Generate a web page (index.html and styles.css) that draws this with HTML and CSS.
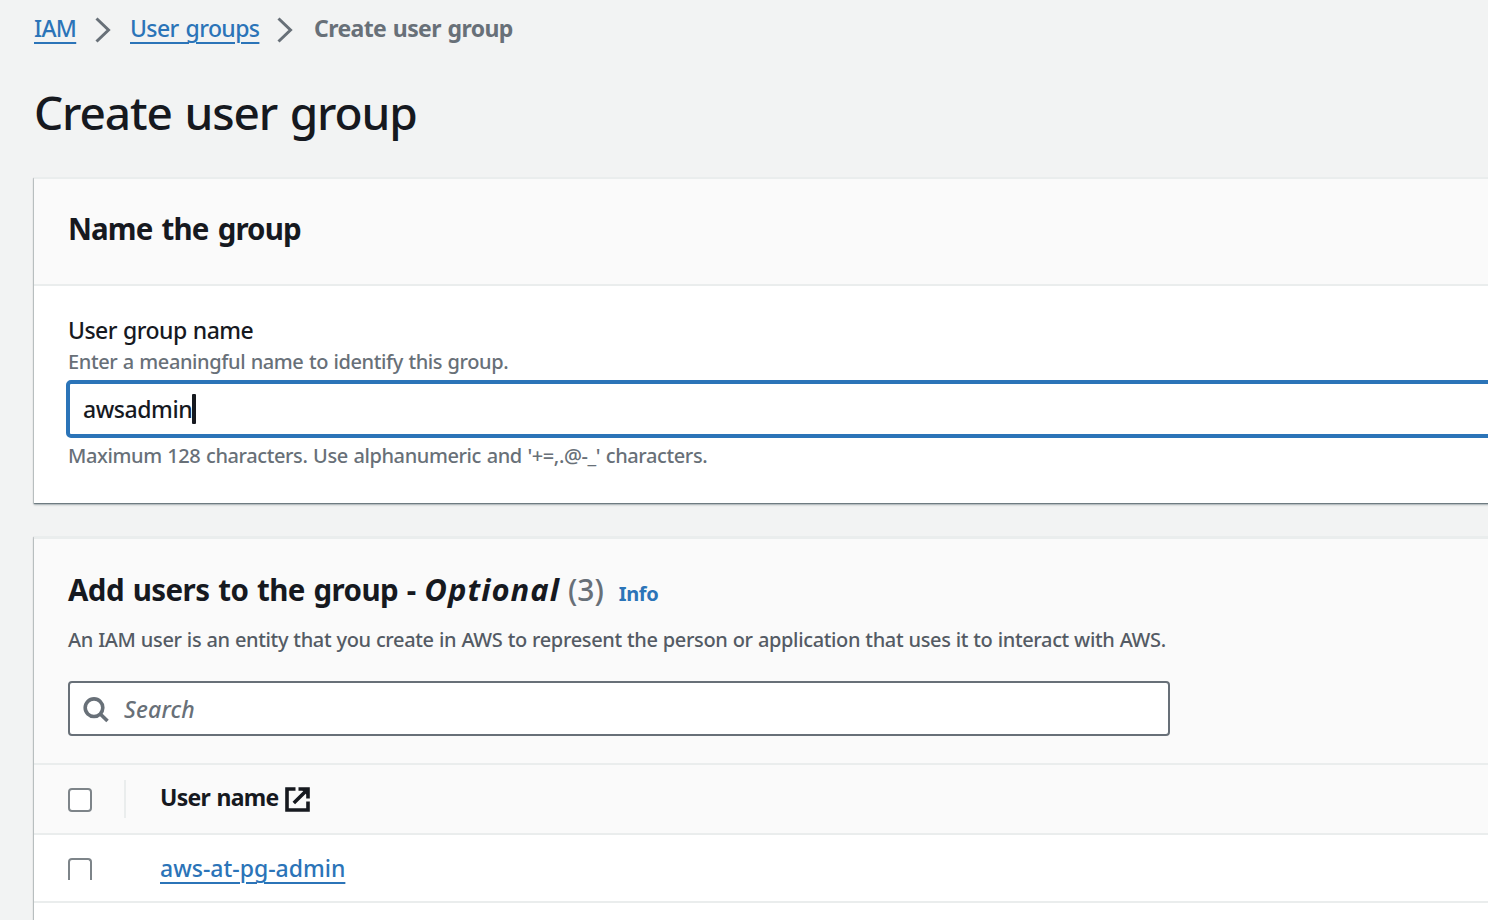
FILE: index.html
```html
<!DOCTYPE html>
<html lang="en">
<head>
<meta charset="utf-8">
<title>Create user group</title>
<link rel="stylesheet" href="styles.css">
</head>
<body>
<main class="page">
  <nav class="crumbs">
    <a class="link crumb-iam" href="#">IAM</a>
    <svg class="chevron" width="16" height="26" viewBox="0 0 16 26"><path d="M1.5 1.5 L13.5 13 L1.5 24.5"/></svg>
    <a class="link crumb-groups" href="#">User groups</a>
    <svg class="chevron" width="16" height="26" viewBox="0 0 16 26"><path d="M1.5 1.5 L13.5 13 L1.5 24.5"/></svg>
    <span class="crumb-current">Create user group</span>
  </nav>
  <h1 class="title"><span>Create user group</span></h1>

  <section class="card name-card">
    <header class="name-header"><h2 class="heading"><span class="name-heading">Name the group</span></h2></header>
    <div class="name-body">
      <div class="label"><span>User group name</span></div>
      <div class="hint hint-top"><span>Enter a meaningful name to identify this group.</span></div>
      <div class="field"><span class="value">awsadmin</span><span class="caret"></span></div>
      <div class="hint hint-bottom"><span>Maximum 128 characters. Use alphanumeric and '+=,.@-_' characters.</span></div>
    </div>
  </section>

  <section class="card users-card">
    <header class="users-header">
      <div class="users-title">
        <h2 class="heading"><span class="add">Add users to the group - </span><em class="optional">Optional</em></h2>
        <span class="count">(3)</span>
        <a class="info" href="#">Info</a>
      </div>
      <p class="desc"><span>An IAM user is an entity that you create in AWS to represent the person or application that uses it to interact with AWS.</span></p>
      <div class="search">
        <svg width="26" height="26" viewBox="0 0 26 26"><circle cx="11" cy="10.7" r="8.8"/><path d="M17.3 17 L24.5 24"/></svg>
        <span class="placeholder">Search</span>
      </div>
    </header>
    <div class="row head-row">
      <span class="checkbox"></span>
      <span class="divider"></span>
      <span class="column-name">User name</span>
      <svg class="external" width="25" height="25" viewBox="0 0 25 25"><path d="M10.5 2 H2 V23 H23 V14.5"/><path d="M13.5 2 H23 V11.5 M22 3 L8.8 16"/><path class="tip" d="M16 2 H23 V9 Z"/></svg>
    </div>
    <div class="row user-row">
      <span class="checkbox checkbox-cut"></span>
      <a class="link user-link" href="#">aws-at-pg-admin</a>
    </div>
    <div class="row next-row"></div>
  </section>
</main>
</body>
</html>
```
FILE: styles.css
```css
* { box-sizing: border-box; }

body {
  margin: 0;
  background: #f2f3f3;
  color: #16191f;
  font-family: "Noto Sans", "Open Sans", sans-serif;
  font-size: 23px;
  font-weight: 500;
}

h1, h2, p { margin: 0; }

.page {
  height: 920px;
  padding-left: 34px;
  overflow: hidden;
  white-space: nowrap;
}

.link {
  color: #2b74b8;
  text-decoration: underline;
  text-decoration-thickness: 2px;
  text-underline-offset: 5px;
}

.crumbs {
  display: flex;
  align-items: center;
  height: 58px;
  line-height: 56px;
}
.crumb-iam { width: 42px; letter-spacing: -.7px; margin-top: -2px; }
.crumb-groups { width: 129px; letter-spacing: -.6px; word-spacing: 1.5px; margin-top: -2px; }
.chevron {
  flex: none;
  margin: 2px 19px 0 18px;
  fill: none;
  stroke: #687078;
  stroke-width: 3;
}
.crumb-iam + .chevron { margin-left: 19px; margin-right: 19px; }
.crumb-current {
  margin: -2px 0 0 2px;
  color: #687078;
  font-weight: 700;
  letter-spacing: -.6px;
  word-spacing: 1.2px;
}

.title {
  height: 119px;
  padding-top: 22px;
  font-size: 46px;
  line-height: 64px;
  font-weight: 500;
  letter-spacing: -1.1px;
  word-spacing: 1.7px;
}

.card {
  background: #fff;
  border-top: 2px solid #eaeded;
  box-shadow: 0 2px 2px rgba(0, 28, 36, .25), 0 1px 1px #8f999e, -1px 1px 1px rgba(0, 7, 22, .12);
  width: 1500px;
}

.name-card { height: 326px; }
.name-header {
  height: 107px;
  padding: 29px 34px;
  background: #fafafa;
  border-bottom: 2px solid #eaeded;
}
.heading { font-size: 30px; line-height: 42px; font-weight: 700; }
.name-heading { font-size: 29.5px; letter-spacing: -.9px; word-spacing: 2.4px; }

.name-body { padding: 30px 32px 0; }
.label { height: 30px; padding-left: 2px; line-height: 29px; letter-spacing: -.55px; word-spacing: .8px; }
.hint { padding-left: 2px; color: #687078; font-size: 20px; line-height: 30px; }
.hint-top { height: 34px; padding-top: 1px; letter-spacing: -.4px; word-spacing: .7px; }
.hint-bottom { padding-top: 3px; letter-spacing: -.4px; word-spacing: .8px; }
.field {
  display: flex;
  align-items: center;
  height: 58px;
  padding-left: 13px;
  border: 4px solid #2b74b8;
  border-radius: 5px;
  background: #fff;
}
.value { letter-spacing: -.45px; }
.caret { width: 4px; height: 30px; border-radius: 1px; background: #16191f; }

.users-card { height: 400px; margin-top: 33px; border-top-width: 3px; }
.users-header {
  height: 226px;
  padding: 29px 34px 0;
  background: #fafafa;
  border-bottom: 2px solid #eaeded;
}
.users-title { display: flex; align-items: baseline; height: 56px; }
.add { white-space: pre; font-size: 29.5px; letter-spacing: -.55px; word-spacing: 1.5px; }
.optional { font-size: 31px; letter-spacing: 1px; }
.count { margin-left: 8px; color: #687078; font-size: 30px; line-height: 42px; letter-spacing: 0; }
.info { margin-left: 15px; color: #2b74b8; font-size: 20px; font-weight: 700; letter-spacing: -.4px; text-decoration: none; }
.desc { height: 57px; color: #545b64; font-size: 20px; line-height: 32px; letter-spacing: -.35px; word-spacing: .35px; }
.search {
  display: flex;
  align-items: center;
  width: 1102px;
  height: 55px;
  padding-left: 13px;
  border: 2px solid #687078;
  border-radius: 4px;
  background: #fff;
  color: #687078;
  font-style: italic;
}
.search svg { margin-top: 2px; fill: none; stroke: #687078; stroke-width: 3.6; }
.placeholder { margin-left: 15px; letter-spacing: .2px; }

.row { display: flex; align-items: center; padding-left: 34px; border-bottom: 2px solid #eaeded; }
.head-row { height: 70px; background: #fafafa; font-weight: 700; }
.user-row { height: 68px; }
.checkbox {
  flex: none;
  width: 24px;
  height: 24px;
  margin-top: 2px;
  border: 2px solid #7d8489;
  border-radius: 4px;
  background: #fff;
}
.checkbox-cut { height: 22px; border-bottom: 0; border-radius: 4px 4px 0 0; }
.divider { width: 2px; height: 38px; margin: 0 34px 0 32px; background: #eaeded; }
.column-name { width: 125px; line-height: 32px; margin-top: -4px; letter-spacing: -.7px; word-spacing: 1px; }
.external { fill: none; stroke: #16191f; stroke-width: 3.6; }
.external .tip { fill: #16191f; stroke: none; }
.user-link { margin-left: 68px; }
.next-row { height: 30px; }
```
